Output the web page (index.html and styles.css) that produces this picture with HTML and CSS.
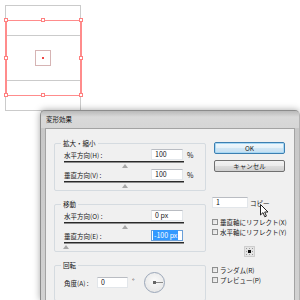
FILE: index.html
```html
<!DOCTYPE html>
<html lang="ja">
<head>
  <meta charset="UTF-8">
  <title>変形効果</title>
  <link rel="stylesheet" href="styles.css">
</head>
<body>
  <!-- artwork on the canvas behind the dialog -->
  <svg class="artboard" width="300" height="112" viewBox="0 0 300 112">
    <rect x="5.5" y="5.5" width="75" height="105" fill="none" stroke="#cbcbcb"/>
    <line x1="5" y1="35.5" x2="81" y2="35.5" stroke="#cbcbcb"/>
    <line x1="5" y1="80.5" x2="81" y2="80.5" stroke="#cbcbcb"/>
    <rect x="35.5" y="50.5" width="15" height="15" fill="none" stroke="#d6b4b4"/>
    <rect x="42" y="57" width="2" height="2" fill="#f04646"/>
    <rect x="6" y="20.5" width="75" height="75" fill="none" stroke="#ff8c8c" stroke-width="1"/>
    <line x1="6" y1="20" x2="6" y2="96" stroke="#ff8c8c" stroke-width="2"/>
    <line x1="81" y1="20" x2="81" y2="96" stroke="#ff8c8c" stroke-width="2"/>
    <g fill="#fff" stroke="#ff8080">
      <rect x="4.5" y="18.5" width="3" height="3"/>
      <rect x="41.5" y="18.5" width="3" height="3"/>
      <rect x="79.5" y="18.5" width="3" height="3"/>
      <rect x="4.5" y="56.5" width="3" height="3"/>
      <rect x="79.5" y="56.5" width="3" height="3"/>
      <rect x="4.5" y="93.5" width="3" height="3"/>
      <rect x="41.5" y="93.5" width="3" height="3"/>
      <rect x="79.5" y="93.5" width="3" height="3"/>
    </g>
  </svg>

  <div class="window">
    <div class="titlebar">変形効果</div>
    <div class="client">
      <div class="left-col">
        <div class="group">
          <span class="legend">拡大・縮小</span>
          <div class="field">
            <div class="row"><span class="label">水平方向(H) :</span><span class="input">100</span><span class="unit">%</span></div>
            <div class="slider"><span class="thumb" style="left: 58px"></span></div>
          </div>
          <div class="field">
            <div class="row"><span class="label">垂直方向(V) :</span><span class="input">100</span><span class="unit">%</span></div>
            <div class="slider"><span class="thumb" style="left: 58px"></span></div>
          </div>
        </div>

        <div class="group">
          <span class="legend">移動</span>
          <div class="field">
            <div class="row"><span class="label">水平方向(O) :</span><span class="input">0 px</span></div>
            <div class="slider"><span class="thumb" style="left: 58px"></span></div>
          </div>
          <div class="field">
            <div class="row"><span class="label">垂直方向(E) :</span><span class="input focused"><span class="selected">-100 px</span></span></div>
            <div class="slider"><span class="thumb" style="left: -1px"></span></div>
          </div>
        </div>

        <div class="group rotate">
          <span class="legend">回転</span>
          <div class="row">
            <span class="label short">角度(A) :</span><span class="input angle">0</span><span class="degree">°</span>
            <span class="dial"><span class="hand"></span></span>
          </div>
        </div>
      </div>

      <div class="right-col">
        <button class="btn default">OK</button>
        <button class="btn">キャンセル</button>
        <div class="copies"><span class="input copy-input">1</span><span>コピー</span></div>
        <div class="check first"><span class="box"></span>垂直軸にリフレクト(X)</div>
        <div class="check"><span class="box"></span>水平軸にリフレクト(Y)</div>
        <svg class="refpoint" width="11" height="11" viewBox="0 0 11 11">
          <rect x="0.5" y="0.5" width="10" height="10" fill="#e4e4e4" stroke="#b0b0b0" stroke-dasharray="1 1"/>
          <g fill="#9a9a9a">
            <rect x="2" y="2" width="1" height="1"/><rect x="5" y="2" width="1" height="1"/><rect x="8" y="2" width="1" height="1"/>
            <rect x="2" y="5" width="1" height="1"/><rect x="8" y="5" width="1" height="1"/>
            <rect x="2" y="8" width="1" height="1"/><rect x="5" y="8" width="1" height="1"/><rect x="8" y="8" width="1" height="1"/>
          </g>
          <rect x="4" y="4" width="3" height="3" fill="#111"/>
        </svg>
        <div class="check random"><span class="box"></span>ランダム(R)</div>
        <div class="check"><span class="box"></span>プレビュー(P)</div>
      </div>
    </div>
  </div>

  <svg class="cursor" width="10" height="14" viewBox="0 0 10 14">
    <path d="M0.5 0.5 L0.5 11 L3 8.6 L4.8 12.8 L6.4 12.1 L4.7 8 L8 8 Z" fill="#fff" stroke="#222" stroke-width="1" stroke-linejoin="round"/>
  </svg>
</body>
</html>
```

FILE: styles.css
```css
body {
  margin: 0;
  width: 300px;
  height: 300px;
  overflow: hidden;
  position: relative;
  background: #fff;
  font-family: "Noto Sans CJK JP", "Noto Sans", sans-serif;
  font-size: 6.5px;
  color: #141414;
}

.artboard {
  display: block;
}

.window {
  position: absolute;
  left: 40px;
  top: 110px;
  width: 260px;
  height: 190px;
  box-sizing: border-box;
  display: flex;
  flex-direction: column;
  background: linear-gradient(to bottom, #c6c6c6, #d2d2d2);
  border: 1px solid #8c8c8c;
  border-bottom: none;
  border-right-color: #b4b4b4;
  border-radius: 5px 5px 0 0;
  box-shadow: 0 0 7px rgba(0, 0, 0, 0.35);
}

.titlebar {
  height: 17px;
  flex-shrink: 0;
  line-height: 17px;
  padding-left: 5px;
  background: linear-gradient(to bottom, #b9b9b9, #d9d9d9 35%, #d6d6d6 100%);
  border-radius: 4px 4px 0 0;
  color: #111;
}

.client {
  flex: 1;
  margin: 0 4px;
  box-sizing: border-box;
  background: #f0f0f0;
  border: 1px solid #a3a3a3;
  border-bottom: none;
  display: flex;
  padding: 13px 0 0 8px;
}

.left-col {
  margin-top: 1px;
  width: 152px;
}

.group {
  position: relative;
  box-sizing: border-box;
  width: 152px;
  border: 1px solid #d5dbe0;
  border-radius: 2px;
  padding: 5px 0 7px 9px;
}

.group + .group {
  margin-top: 13px;
}

.group.rotate {
  padding-top: 6px;
}

.legend {
  position: absolute;
  top: -5px;
  left: 6px;
  padding: 0 2px;
  line-height: 9px;
  background: #f0f0f0;
}

.field + .field {
  margin-top: 6px;
}

.row {
  display: flex;
  align-items: center;
  height: 11px;
}

.rotate .row {
  height: 21px;
}

.label {
  width: 87px;
  white-space: nowrap;
}

.label.short {
  width: 33px;
}

.input {
  box-sizing: border-box;
  width: 32px;
  height: 11px;
  line-height: 9px;
  padding-left: 3px;
  background: #fff;
  border: 1px solid #e2e6ea;
  border-top-color: #b9bcc2;
  font-size: 7px;
  white-space: nowrap;
}

.input.focused {
  border-color: #6a9fd8;
  padding-left: 1px;
}

.selected {
  background: #3399ff;
  color: #fff;
  padding: 0 1px;
}

.input.angle {
  width: 31px;
}

.unit {
  margin-left: 4px;
  font-size: 7px;
}

.degree {
  margin-left: 4px;
  align-self: flex-start;
  margin-top: 4px;
  font-size: 7px;
}

.dial {
  position: relative;
  margin-left: 9px;
  width: 21px;
  height: 21px;
  box-sizing: border-box;
  border: 1px solid #9aa6b8;
  border-radius: 50%;
  background: radial-gradient(circle at 50% 40%, #fafafa, #e2e2e2);
}

.hand {
  position: absolute;
  left: 9px;
  top: 9px;
  width: 9px;
  height: 1px;
  background: #8a8a8a;
}

.hand::before {
  content: "";
  position: absolute;
  left: -1px;
  top: -1px;
  width: 3px;
  height: 3px;
  background: #666;
}

.slider {
  position: relative;
  width: 120px;
  height: 1px;
  margin-top: 1px;
  background: #2a2a2a;
  border-bottom: 1px solid #8d8d8d;
}

.thumb {
  position: absolute;
  top: 3px;
  width: 0;
  height: 0;
  border-left: 3px solid transparent;
  border-right: 3px solid transparent;
  border-bottom: 4px solid #a7a7a7;
}

.right-col {
  display: flex;
  flex-direction: column;
  align-items: flex-start;
  margin-left: 6px;
}

.btn {
  box-sizing: border-box;
  width: 71px;
  height: 12px;
  margin: 0 0 0 2px;
  padding: 0;
  font-family: inherit;
  font-size: 6.5px;
  line-height: 10px;
  color: #1a1a1a;
  border: 1px solid #707070;
  border-radius: 2px;
  background: linear-gradient(to bottom, #f3f3f3, #ebebeb 50%, #dddddd 50%, #cfcfcf);
}

.btn + .btn {
  margin-top: 6px;
}

.btn.default {
  border-color: #3c7fb1;
  background: linear-gradient(to bottom, #f1f8fc, #e5f1f9 50%, #d2e7f5 50%, #c4def1);
  box-shadow: inset 0 0 0 1px #a8d8f4;
}

.copies {
  display: flex;
  align-items: center;
  margin-top: 25px;
}

.copy-input {
  width: 36px;
  margin-right: 2px;
}

.check {
  display: flex;
  align-items: center;
  height: 8px;
  margin-top: 2px;
  white-space: nowrap;
}

.check.first {
  margin-top: 10px;
}

.check.random {
  margin-top: 9px;
}

.box {
  box-sizing: border-box;
  width: 6px;
  height: 6px;
  margin-right: 2px;
  border: 1px solid #8e8f8f;
  background: linear-gradient(to bottom right, #dcdcdc, #f6f6f6);
}

.refpoint {
  display: block;
  margin: 10px 0 0 32px;
}

.cursor {
  position: absolute;
  left: 260px;
  top: 204px;
}
```
